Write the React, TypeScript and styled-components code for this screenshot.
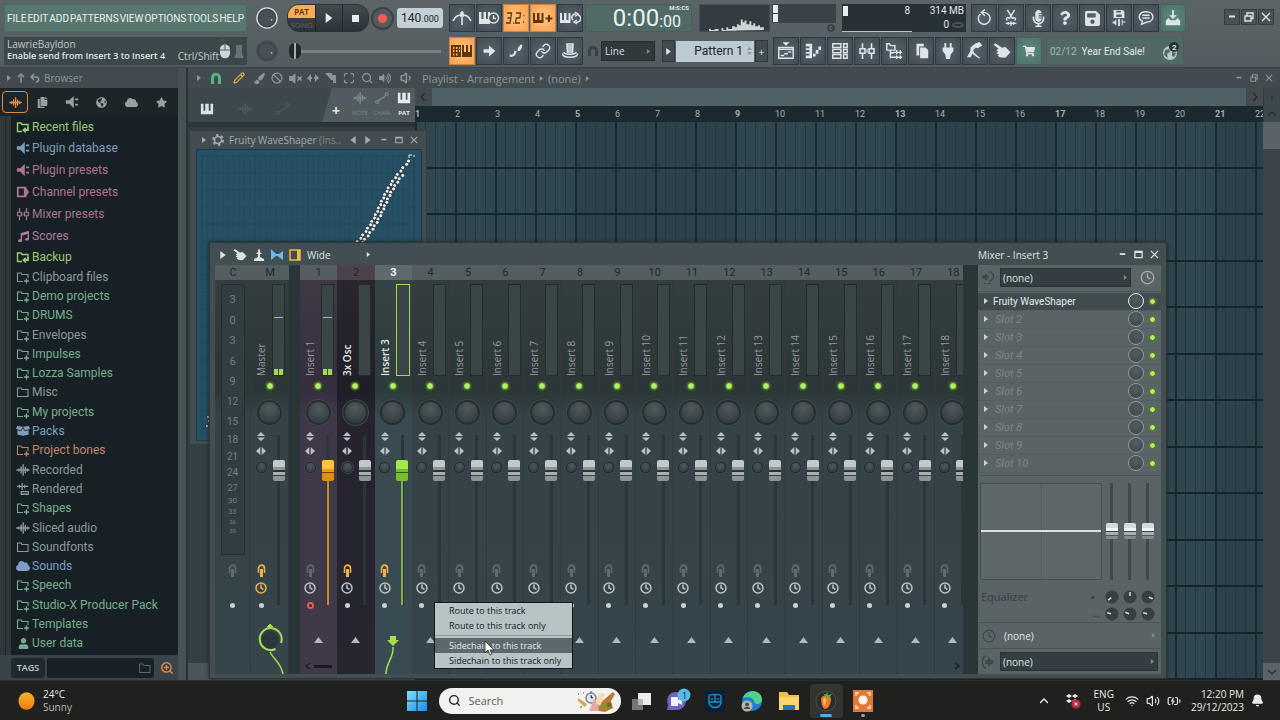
import React from 'react';
import styled, { createGlobalStyle, css } from 'styled-components';
import {
  FaStar, FaCloud, FaGlobeAmericas, FaSave, FaQuestion, FaShoppingCart,
  FaMicrophoneAlt, FaCopy, FaUser, FaMusic, FaVolumeMute, FaPaintBrush,
  FaBoxOpen, FaVolumeUp,
} from 'react-icons/fa';
import { Ban, Clock, Link, Maximize, Pencil, Search, Volume1, Volume2, Wifi, ZoomIn, BatteryCharging, Bell } from 'lucide-react';

const UI = '"Open Sans", "Noto Sans", sans-serif';
const NARROW = 'Roboto, "Open Sans", sans-serif';

const Global = createGlobalStyle`
  * { box-sizing: border-box; }
  html, body { margin: 0; background: #20211e; }
  body { font-family: ${UI}; font-size: 11px; color: #c3cbcd; }
  button, input, select { font: inherit; color: inherit; margin: 0; padding: 0; border: 0; background: none; }
  svg { display: block; flex: none; }
  ul { list-style: none; margin: 0; padding: 0; }
`;

/* ---------- shared shapes ---------- */

type IconProps = { size?: number };

const WaveIcon = ({ size = 14 }: IconProps) => (
  <svg width={size} height={size} viewBox="0 0 16 16" fill="none" stroke="currentColor" strokeWidth="1.6" strokeLinecap="round">
    <path d="M3.4 6.8v2.4M5.8 4.500v7M8.2 2v12M10.6 5v6M13 6.8v2.4M1 8h14" />
  </svg>
);
const PianoIcon = ({ size = 14 }: IconProps) => (
  <svg width={size} height={size} viewBox="0 0 16 16" fill="currentColor">
    <path d="M1 2h3v8h2V2h4v8h2V2h3v12H1z" />
  </svg>
);
const PathIcon = ({ size = 14 }: IconProps) => (
  <svg width={size} height={size} viewBox="0 0 16 16" fill="none" stroke="currentColor" strokeWidth="1.3">
    <circle cx="2.5" cy="12.5" r="1.7" /><circle cx="13.5" cy="3.5" r="1.7" />
    <path d="M4 11.5C6 7.500 9 10 12 5" />
  </svg>
);
const FolderIcon = ({ kind }: { kind: string }) => (
  <svg width="14" height="14" viewBox="0 0 14 14" fill="none" stroke="currentColor" strokeWidth="1.1">
    {kind === 'plain' && <path d="M1.500 3h3.500l1 1.500h6v7H1.500z" />}
    {kind === 'plus' && <><path d="M7 11.500H1.500V3H5l1 1.500h6v3.500" /><path d="M10.500 8.500v5M8 11h5" strokeWidth="1.4" /></>}
    {kind === 'link' && <><path d="M6 11.500H1.500V3H5l1 1.500h6v2" strokeWidth="1.4" /><path d="M12 6.500v3.500H8M9.800 7.800L7.500 10l2.300 2.300" strokeWidth="1.8" /></>}
  </svg>
);
const MixerIcon = ({ size = 14 }: IconProps) => (
  <svg width={size} height={size} viewBox="0 0 16 16" fill="none" stroke="currentColor" strokeWidth="1.4">
    <path d="M4 1v5M4 10v5M12 1v5M12 10v5M1.800 6h4.400v4H1.800zM9.800 6h4.400v4H9.800z" />
    <path d="M8 6.500v3" strokeWidth="1" />
  </svg>
);
const ChannelIcon = ({ size = 14 }: IconProps) => (
  <svg width={size} height={size} viewBox="0 0 16 16" fill="currentColor">
    <path d="M1 2h11v2l3 4-3 4v2H1zM3 4v8h6V4z" fillRule="evenodd" />
  </svg>
);
const RenderIcon = () => (
  <svg width="14" height="14" viewBox="0 0 16 16" fill="none" stroke="currentColor" strokeWidth="1.5">
    <path d="M1 5h13M4 3v4M7 1v8M10 3v4M6 11h8v3H6z" />
  </svg>
);
const SpeakerPlug = () => (
  <svg width="14" height="14" viewBox="0 0 16 16" fill="currentColor">
    <path d="M1 6h4l5-5v14l-5-5H1zM11.500 4H15v2h-3.500zM11.500 10H15v2h-3.500z" />
  </svg>
);
const MagnetIcon = () => (
  <svg width="12" height="12" viewBox="0 0 12 12" fill="none" stroke="currentColor" strokeWidth="3"><path d="M2.500 12V6c0-5 7-5 7 0v6" /></svg>
);
const Tri = ({ dir = 'right', size = 6 }: { dir?: string; size?: number }) => (
  <svg width={size} height={size} viewBox="0 0 6 6" fill="currentColor">
    <path d={dir === 'right' ? 'M1 0l4 3-4 3z' : 'M5 0L1 3l4 3z'} />
  </svg>
);
const WinIcon = ({ kind, size = 10 }: { kind: string; size?: number }) => (
  <svg width={size} height={size} viewBox="0 0 10 10" fill="none" stroke="currentColor" strokeWidth="1.400">
    {kind === 'min' && <path d="M2 4.500h6" strokeWidth="2" />}
    {kind === 'max' && <path d="M1 2.500h8M1 1.500h8v7H1z" />}
    {kind === 'restore' && <path d="M1 4h6v5H1zM3 3.500V1h6v5.500H7.500" />}
    {kind === 'close' && <path d="M1 1l8 8M9 1L1 9" />}
  </svg>
);
const HandIcon = ({ size = 16 }: IconProps) => (
  <svg width={size} height={size} viewBox="0 0 16 16" fill="currentColor">
    <path d="M0.500 2.500L2 1l6 4 3-.5 4.500 4.500-4.500 5-5-.5L4 12l1.500-1L3 10l1.500-1.500L3 7l2-1z" />
  </svg>
);

/* ---------- main toolbar ---------- */

const Shell = styled.div`
  display: flex;
  flex-direction: column;
  min-height: 100vh;
`;
const Toolbar = styled.header`
  display: flex;
  padding: 4px 6px 2px 4px;
  background: linear-gradient(#5b6467, #535c60);
  border-bottom: 1px solid #3b4448;
`;
const ToolCol = styled.div<{ $w?: number }>`
  display: flex;
  flex-direction: column;
  gap: 5px;
  min-width: 0;
  ${p => (p.$w ? css`flex: 0 0 ${p.$w}px;` : css`flex: 1;`)}
`;
const ToolRow = styled.div`
  display: flex;
  align-items: center;
  height: 28px;
`;
const Group = styled.div<{ $ml?: number }>`
  display: flex;
  align-items: center;
  gap: 1px;
  margin-left: ${p => p.$ml ?? 0}px;
`;
const Menu = styled.nav`
  display: flex;
  align-items: center;
  justify-content: space-between;
  height: 28px;
  padding: 0 2px;
  background: #58776e;
  border: 1px solid #496a62;
  font: 10px ${NARROW};
  color: #e9f2ef;
  button { cursor: pointer; }
`;
const Hint = styled.div`
  display: flex;
  height: 28px;
  padding: 0 3px;
  background: #3c474b;
  font-size: 10px;
  line-height: 12px;
  color: #c1cacc;
`;
const HintText = styled.div`
  flex: 1;
  white-space: nowrap;
  padding-top: 1px;
  p { margin: 0; display: flex; justify-content: space-between; }
  strong { font-weight: 600; font-size: 9px; color: #dfe6e8; }
`;
const KnobCell = styled.div`
  display: flex;
  align-items: center;
  justify-content: center;
  height: 28px;
`;
const ToolButton = styled.button<{ $tone?: 'on' | 'green' }>`
  display: flex;
  align-items: center;
  justify-content: center;
  width: 26px;
  height: 28px;
  border: 1px solid #2f383c;
  color: #dde5e8;
  background: radial-gradient(#56616a, #424c53);
  ${p => p.$tone === 'on' && css`background: radial-gradient(#ffc685, #f9a04e); border-color: #c98443; color: #5f3506;`}
  ${p => p.$tone === 'green' && css`background: radial-gradient(#5f8b82, #4d7169); border-color: #45645e;`}
`;
const Transport = styled.div`
  display: flex;
  width: 82px;
  height: 28px;
  border-radius: 12px;
  overflow: hidden;
  background: linear-gradient(#424b50, #2b3338);
  border: 1px solid #2a3236;
`;
const ModeSwitch = styled.div`
  display: flex;
  flex-direction: column;
  width: 27px;
  font-size: 8px;
  line-height: 12px;
  text-align: center;
  button:first-child { background: #f9ac55; color: #3b2a10; font-weight: 600; height: 13px; }
  button:last-child { color: #5d676c; height: 13px; }
`;
const TransportButton = styled.button`
  flex: 1;
  display: flex;
  align-items: center;
  justify-content: center;
  border-left: 1px solid #20282c;
  color: #e8eeee;
`;
const Record = styled.button`
  width: 23px;
  height: 23px;
  margin-left: 2px;
  border-radius: 50%;
  border: 2px solid #394347;
  background: radial-gradient(circle, #fb5a50 0 4px, #505a60 5px);
`;
const Tempo = styled.button`
  display: flex;
  align-items: baseline;
  justify-content: center;
  width: 46px;
  height: 20px;
  margin-left: 3px;
  border-radius: 3px;
  background: #c3d0d6;
  color: #1d262a;
  font: 12px/20px ${NARROW};
  small { font-size: 9px; }
`;
const TimeBox = styled.output`
  display: flex;
  justify-content: flex-end;
  align-items: flex-end;
  position: relative;
  width: 107px;
  height: 28px;
  padding-right: 10px;
  margin-left: 2px;
  background: #526a66;
  border: 1px solid #48605c;
  font: 24px/26px ${NARROW};
  color: #e9f3f1;
  small { font-size: 16px; line-height: 19px; }
  sup { position: absolute; right: 2px; top: 0; font: 600 6px/6px ${NARROW}; }
`;
const Scope = styled.div`
  display: flex;
  align-items: flex-end;
  width: 71px;
  height: 28px;
  margin-left: 7px;
  background: #333d41;
  border: 1px solid #454f53;
`;
const PeakPanel = styled.div`
  display: flex;
  flex-direction: column;
  align-items: flex-end;
  height: 28px;
  width: 64px;
  margin-left: 2px;
`;
const PeakBars = styled.div`
  align-self: stretch;
  height: 19px;
  padding: 1px;
  background: #3a4448;
  i { display: block; width: 5px; height: 8px; margin-bottom: 1px; background: #e8edee; }
`;
const Cpu = styled.div`
  display: grid;
  grid-template-columns: 70px 1fr;
  grid-auto-rows: 14px;
  width: 124px;
  height: 28px;
  margin-left: 6px;
  background: #283135;
  font: 10px/14px ${NARROW};
  color: #e1e7e8;
  text-align: right;
  span { padding-right: 2px; }
`;
const CpuBar = styled.span`
  display: flex;
  justify-content: space-between;
  align-items: center;
  i { width: 5px; height: 10px; background: #e8edee; margin-left: 1px; }
`;
const CpuLine = styled.span`
  border-bottom: 1px solid #b9c1c3;
`;
const CpuVoices = styled.span`
  display: flex;
  justify-content: flex-end;
  align-items: center;
  gap: 3px;
  i { width: 12px; height: 6px; border: 2px solid #4c565a; border-radius: 50%; }
`;
const WindowButtons = styled.div`
  display: flex;
  gap: 1px;
  margin: 0 0 3px auto;
  button {
    display: flex; align-items: center; justify-content: center;
    width: 16px; height: 16px; border: 1px solid #333c40; background: #485155; color: #dde4e6;
  }
`;
const Slider = styled.input`
  appearance: none;
  width: 152px;
  height: 16px;
  margin: 0 4px 0 2px;
  background: linear-gradient(#79837f, #79837f) center / 100% 3px no-repeat;
  &::-webkit-slider-thumb {
    appearance: none; width: 12px; height: 16px; border-radius: 6px;
    background: linear-gradient(90deg, #20282b 5px, #a4adae 5px 7px, #20282b 7px);
  }
`;
const SnapBox = styled.label`
  display: flex;
  align-items: center;
  width: 54px;
  height: 20px;
  margin-left: 2px;
  padding: 0 3px;
  border: 1px solid #262e31;
  background: #30393d;
  color: #7c878a;
  select { appearance: none; flex: 1; min-width: 0; font-size: 10px; color: #d5dcde; }
`;
const PatternButton = styled.button`
  display: flex;
  align-items: center;
  justify-content: flex-end;
  gap: 4px;
  width: 78px;
  height: 21px;
  padding-right: 2px;
  background: #bccad1;
  color: #1a2429;
  font: 12px/20px ${NARROW};
  svg { color: #8a979c; }
`;
const PatternSide = styled.button`
  display: flex; align-items: center; justify-content: center;
  width: 13px;
  height: 22px;
  border: 1px solid #2e373b;
  background: #414b50;
  color: #dfe6e8;
`;
const News = styled.a`
  display: flex;
  align-items: center;
  gap: 5px;
  width: 138px;
  height: 28px;
  margin-left: 4px;
  padding: 0 3px;
  background: #516964;
  border: 1px solid #48605c;
  font: 10px ${NARROW};
  color: #e0e9e7;
  text-decoration: none;
  white-space: nowrap;
  time { color: #a6b5b2; }
  svg { margin-left: auto; }
`;

const KnobSvg = ({ size, ring }: { size: number; ring: string }) => (
  <svg width={size} height={size} viewBox="0 0 24 24">
    <circle cx="12" cy="12" r="11" fill="#3d474c" stroke={ring} strokeWidth="1.500" />
    <circle cx="12" cy="12" r="8.500" fill="#475157" />
    <circle cx="17" cy="14" r="1" fill="#b9c2c4" />
  </svg>
);

const Icon = ({ d, size = 18, fill = false }: { d: string; size?: number; fill?: boolean }) => (
  <svg width={size} height={size} viewBox="0 0 20 20" fill={fill ? 'currentColor' : 'none'} stroke={fill ? 'none' : 'currentColor'} strokeWidth="1.600" fillRule="evenodd"><path d={d} /></svg>
);

const PianoClock = () => (
  <svg width="22" height="16" viewBox="0 0 22 16" fill="none" stroke="currentColor" strokeWidth="1.400">
    <path d="M1 2h2.500v7h2V2H8v7h2V2h2v12H1z" fill="currentColor" stroke="none" />
    <circle cx="15.500" cy="8" r="5" fill="#4b555c" /><path d="M15.500 5v3.500H18" />
  </svg>
);
const PianoPlus = ({ loop }: { loop?: boolean }) => (
  <svg width="22" height="16" viewBox="0 0 22 16" fill="currentColor">
    <path d="M1 3h2v7h2V3h2.500v7h2V3h2v10H1z" />
    {loop
      ? <path d="M14 10a3.500 3.500 0 0 1 3-6M19 5a3.500 3.500 0 0 1-2 7M16 2l3 2-3 2.500M18 14l-3-2 3-2" fill="none" stroke="currentColor" strokeWidth="1.500" />
      : <path d="M16 5h2v2.500h2.500v2H18V12h-2V9.500h-2.500v-2H16z" />}
  </svg>
);

const patternTools: { name: string; on?: boolean; icon: React.ReactNode }[] = [
  { name: 'Typing keyboard', on: true, icon: <svg width="22" height="14" viewBox="0 0 22 14" fill="currentColor"><path d="M0 1h10v12H0zM2 3v2h1.500V3zM5 3v2h1.500V3zM8 3v2h1V3zM2 6v2h1.500V6zM5 6v2h1.500V6zM8 6v2h1V6zM2 9.500v2h1.500v-2zM5 9.500v2h1.500v-2z" fillRule="evenodd" /><path d="M11 1h2v7h2V1h2v7h2V1h2v12H11z" /></svg> },
  { name: 'Step edit', icon: <Icon fill d="M4 8h6V4l7 6-7 6v-4H4z" /> },
  { name: 'Slide notes', icon: <Icon fill d="M3 14c4 1 5-1 5-4h2.500c0 4-3 7-7.500 6.500zM12 8c0-3 2-2 2.500-5H17c0 4-2 5-2.500 7H12z" /> },
  { name: 'Multilink controllers', icon: <Link size={16} /> },
  { name: 'Auto stamp', icon: <Icon size={20} d="M7 3h6l-.5 8h-5zM4 11c0 3 12 3 12 0M2.500 12.500c0 5 15 5 15 0M7 5h6M7 7h6M7.300 9h5.400" /> },
];
const fileTools: { name: string; green?: boolean; icon: React.ReactNode }[] = [
  { name: 'Undo', icon: <Icon d="M6 5.500A6.500 6.500 0 1 0 11 4H7M11 0.500L7 4 11 7.500" /> },
  { name: 'Cut sample', icon: <Icon d="M6 1l6 10M14 1L8 11M6 12.500a1.500 1.500 0 1 1 2-1.500M14 12.500a1.500 1.500 0 1 0-2-1.500M4 16h12M7 14.500v3M10 13.500v5M13 14.500v3" /> },
  { name: 'Record audio', icon: <FaMicrophoneAlt size={17} /> },
  { name: 'Help', icon: <FaQuestion size={14} /> },
  { name: 'Save', icon: <FaSave size={17} /> },
  { name: 'Save as audio', icon: <Icon fill d="M4 1h10l2 2v7H4zM7 2v2h5V2zM7 6v3h6V6zM3 14h2v-1h1v-1h1v6H6v-1H5v-1H3zM9 11h2v8H9zM13 12h1v2h3v1h-3v3h-1z" /> },
  { name: 'Chat', icon: <Icon d="M10 3c10 0 10 11 1 11.500L5 17l1-3.500C0 11 2 3 10 3zM6 7h8M6 10h8" /> },
  { name: 'Download', green: true, icon: <Icon fill d="M9 1h2v6h3l-4 4-4-4h3zM2 13l3-3 2 2.500h6L15 10l3 3v5H2z" /> },
];
const viewTools: { name: string; green?: boolean; icon: React.ReactNode }[] = [
  { name: 'Playlist', icon: <Icon d="M2 6h16v12H2zM2 8h16M4 15h4M8 13h4M12 11h4M8 1h4l-2 2z" /> },
  { name: 'Piano roll', icon: <Icon fill d="M2 2h7v16H2v-3h4v-2H2v-2h4V9H2V7h4V5H2zM10 13h3v3h-3zM13 9h3v4h-3zM16 5h3v4h-3z" /> },
  { name: 'Channel rack', icon: <Icon d="M2 2h9v4H2zM2 8h9v4H2zM2 14h9v4H2zM14 2h4v4h-4zM14 8h4v4h-4zM14 14h4v4h-4z" /> },
  { name: 'Mixer', icon: <MixerIcon size={18} /> },
  { name: 'Browser', icon: <Icon d="M2 2h3l1 2h5v5H2zM6 9v9M6 12h4M6 17h4M13 9v5M17 9v5M10 11.500h9M13 15v4M17 15v4M10 17h9" /> },
  { name: 'Project picker', icon: <Icon fill d="M5 2h8v3H8v10H5zM9 6h6l3 3v9H9z" /> },
  { name: 'Plugin picker', icon: <Icon fill d="M6 1h2v5h4V1h2v5h2v4l-3 4-1 5H8l-1-5-3-4V6h2z" /> },
  { name: 'Tempo tapper', icon: <Icon fill d="M10 2l5-2 3 4-5 3-2-1-3 3 1 3 7 6h-2l-7-5-2 4H1l4-7v-4z" /> },
  { name: 'Touch controllers', icon: <HandIcon size={18} /> },
  { name: 'Shop', green: true, icon: <FaShoppingCart size={12} /> },
];

const spectrum = 'M8 27v-2h2v1h4v-1h4v2h3v-3h2v2h3v-3h2v2h4v-3h3v1h2v-3h2v1h2v-6h2v3h2v-2h2v4h3v-3h2v4h2v-2h2v3h3v-1h2v2h4v3z';

const TopBar = () => (
  <Toolbar>
    <ToolCol $w={243}>
      <Menu>{['FILE', 'EDIT', 'ADD', 'PATTERNS', 'VIEW', 'OPTIONS', 'TOOLS', 'HELP'].map(m => <button key={m}>{m}</button>)}</Menu>
      <Hint>
        <HintText>
          <p>LawrieBayldon</p>
          <p><strong>Enable send from Insert 3 to Insert 4</strong><span>Ctrl/Shift</span></p>
        </HintText>
        <svg width="25" height="24" viewBox="0 0 25 24">
          <path d="M1 12c0-6 10-6 10 0v4c0 7-10 7-10 0z" fill="#cdd4d5" /><path d="M6 8v5M1 13h10M6 8c0-4-3-3-2-6" stroke="#566064" fill="none" />
          <path d="M17 8h6v9l2 4H15l2-4z" fill="#687276" />
        </svg>
      </Hint>
    </ToolCol>
    <ToolCol $w={40}>
      <KnobCell><KnobSvg size={22} ring="#d5dddf" /></KnobCell>
      <KnobCell><KnobSvg size={22} ring="#454f54" /></KnobCell>
    </ToolCol>
    <ToolCol>
      <ToolRow>
        <Transport>
          <ModeSwitch><button>PAT</button><button>SONG</button></ModeSwitch>
          <TransportButton aria-label="Play"><Tri size={10} /></TransportButton>
          <TransportButton aria-label="Stop"><svg width="7" height="7"><rect width="7" height="7" fill="currentColor" /></svg></TransportButton>
        </Transport>
        <Record aria-label="Record" />
        <Tempo>140<small>.000</small></Tempo>
        <Group $ml={6}>
          <ToolButton aria-label="Metronome"><Icon size={20} d="M10 3v14M1 13c3-6 6-6 9-6s6 0 9 6M9 5h2v3H9z" /></ToolButton>
          <ToolButton aria-label="Wait for input"><PianoClock /></ToolButton>
          <ToolButton $tone="on" aria-label="Countdown"><svg width="20" height="14" viewBox="0 0 20 14" fill="none" stroke="currentColor" strokeWidth="1.300"><path d="M1 2h4.500L4 12H0M1.500 7h3M7 12h1M10 2h4.500l-.7 5h-3.500L9.500 12H14M17.500 4.500h1M17 11h1" /></svg></ToolButton>
          <ToolButton $tone="on" aria-label="Blend notes"><PianoPlus /></ToolButton>
          <ToolButton aria-label="Loop recording"><PianoPlus loop /></ToolButton>
        </Group>
        <TimeBox><sup>M:S:CS</sup>0:00<small>:00</small></TimeBox>
        <Scope><svg width="69" height="26" viewBox="0 0 69 27"><path d={spectrum} fill="#cbd4d6" /></svg></Scope>
        <PeakPanel>
          <PeakBars><i /><i /></PeakBars>
          <svg width="10" height="9" viewBox="0 0 10 9" fill="none" stroke="#333c40" strokeWidth="1.500"><circle cx="5" cy="5" r="3" /><path d="M5 5h3" /></svg>
        </PeakPanel>
        <Cpu>
          <CpuBar><i />8</CpuBar><span>314 MB</span>
          <CpuLine /><CpuVoices>0<i /></CpuVoices>
        </Cpu>
        <Group $ml={5}>{fileTools.map(t => <ToolButton key={t.name} aria-label={t.name} $tone={t.green ? 'green' : undefined}>{t.icon}</ToolButton>)}</Group>
        <WindowButtons>{['min', 'restore', 'close'].map(k => <button key={k} aria-label={k}><WinIcon kind={k} /></button>)}</WindowButtons>
      </ToolRow>
      <ToolRow>
        <Slider type="range" defaultValue={0} aria-label="Song position" />
        <Group $ml={4}>{patternTools.map(t => <ToolButton key={t.name} aria-label={t.name} $tone={t.on ? 'on' : undefined}>{t.icon}</ToolButton>)}</Group>
        <Group $ml={4}><svg width="12" height="12" viewBox="0 0 12 12" fill="none" stroke="#394347" strokeWidth="3"><path d="M2.500 11V6c0-5 7-5 7 0v5" /></svg></Group>
        <SnapBox><select aria-label="Snap" defaultValue="Line"><option>Line</option></select><Tri size={5} /></SnapBox>
        <Group $ml={7}>
          <PatternSide aria-label="Pattern menu"><Tri size={7} /></PatternSide>
          <PatternButton>Pattern 1<svg width="5" height="10" viewBox="0 0 5 10" fill="currentColor"><path d="M0 4l2.500-3L5 4zM0 6l2.500 3L5 6z" /></svg></PatternButton>
          <PatternSide aria-label="Add pattern">+</PatternSide>
        </Group>
        <Group $ml={5}>{viewTools.map(t => <ToolButton key={t.name} aria-label={t.name} $tone={t.green ? 'green' : undefined}>{t.icon}</ToolButton>)}</Group>
        <News href="#news"><time>02/12</time>Year End Sale!<svg width="18" height="22" viewBox="0 0 18 22"><circle cx="8" cy="13" r="7" fill="#bccbc8" /><path d="M3 10l4-1 1 3-3 2 1 4-4-3zM10 12l4 1-2 4-2-1z" fill="#526a66" /><circle cx="12" cy="7" r="5" fill="#29332f" /><text x="10" y="10" fontSize="8" fontWeight="700" fill="#dfe8e5">2</text></svg></News>
      </ToolRow>
    </ToolCol>
  </Toolbar>
);

/* ---------- browser ---------- */

const Main = styled.div`
  flex: 1;
  display: flex;
  min-height: 612px;
`;
const Browser = styled.aside`
  flex: 0 0 178px;
  display: flex;
  flex-direction: column;
  background: #2f393d;
`;
const BrowserTitle = styled.div`
  display: flex;
  align-items: center;
  gap: 4px;
  height: 20px;
  padding-left: 6px;
  background: #414b4f;
  color: #8c9699;
  font-size: 10px;
`;
const BrowserTabs = styled.div`
  display: flex;
  align-items: center;
  height: 28px;
  background: #1d2529;
  padding: 0 2px;
  button { flex: 1; height: 22px; display: flex; align-items: center; justify-content: center; color: #98a1a4; }
  button:first-child { flex: 0 0 26px; border: 1px solid #d98a48; border-radius: 4px; color: #e78c42; }
`;
const BrowserBody = styled.div`
  flex: 1;
  display: flex;
  flex-direction: column;
  margin-left: 11px;
  background: #172125;
  box-shadow: -5px 0 0 #2f393d, -6px 0 0 #1c2528;
`;
const Places = styled.ul`
  padding-top: 1px;
`;
const Folders = styled.ul`
  flex: 1;
  display: grid;
  grid-auto-rows: 1fr;
  padding-bottom: 2px;
`;
const PlaceRow = styled.li<{ $color: string; $h?: number }>`
  display: flex;
  align-items: center;
  gap: 2px;
  height: ${p => (p.$h ? `${p.$h}px` : 'auto')};
  padding-left: 5px;
  color: ${p => p.$color};
  font: 12px/18px ${NARROW};
`;
const TagBar = styled.div`
  display: flex;
  align-items: center;
  gap: 2px;
  height: 25px;
  padding: 0 4px 0 11px;
  background: #39444a;
  color: #c0c8cb;
  button:first-child { width: 34px; height: 20px; background: #20292e; border-radius: 4px; font-weight: 600; font-size: 9px; }
`;
const TagField = styled.label`
  flex: 1;
  display: flex;
  align-items: center;
  height: 20px;
  padding-right: 2px;
  background: #172024;
  border-radius: 3px;
  color: #5b6569;
  input { flex: 1; min-width: 0; width: 20px; }
`;
const FindButton = styled.button`
  color: #e08b3e;
  padding-left: 4px;
`;

const G = '#77ad8e';
const N = '#8b999c';
const places: [string, string, number, React.ReactNode][] = [
  ['Recent files', '#9cc873', 20, <FolderIcon kind="link" />],
  ['Plugin database', '#7f9dba', 22, <SpeakerPlug />],
  ['Plugin presets', '#b37291', 22, <SpeakerPlug />],
  ['Channel presets', '#b37291', 22, <ChannelIcon />],
  ['Mixer presets', '#a87393', 22, <MixerIcon />],
  ['Scores', '#b5789f', 22, <FaMusic size={11} />],
  ['Backup', '#9cc873', 20, <FolderIcon kind="link" />],
];
const plus = <FolderIcon kind="plus" />;
const folders: [string, string, React.ReactNode][] = [
  ['Clipboard files', N, plus], ['Demo projects', G, plus], ['DRUMS', G, plus], ['Envelopes', N, plus],
  ['Impulses', G, plus], ['Lozza Samples', G, plus], ['Misc', N, <FolderIcon kind="plain" />], ['My projects', G, plus],
  ['Packs', '#7f9dba', <FaBoxOpen size={14} />], ['Project bones', '#c0866c', plus], ['Recorded', N, <WaveIcon />],
  ['Rendered', N, <RenderIcon />], ['Shapes', G, plus], ['Sliced audio', N, <WaveIcon />],
  ['Soundfonts', N, <FolderIcon kind="plain" />], ['Sounds', '#7d9cc8', <FaCloud size={14} />], ['Speech', G, plus],
  ['Studio-X Producer Pack', G, plus], ['Templates', G, plus], ['User data', G, <FaUser size={11} />],
];
const IconSlot = styled.span`
  display: flex;
  justify-content: center;
  width: 14px;
`;

const BrowserPanel = () => (
  <Browser>
    <BrowserTitle>
      <Tri />
      <svg width="10" height="10" viewBox="0 0 10 10" fill="none" stroke="currentColor" strokeWidth="1.500"><path d="M5 10V1M2 4l3-3 3 3" /></svg>
      <svg width="10" height="10" viewBox="0 0 10 10" fill="none" stroke="currentColor" strokeWidth="1.500"><path d="M4 1L1 4l3 3M1 4h5c4 0 3 5 0 5" /></svg>
      Browser
    </BrowserTitle>
    <BrowserTabs>
      <button aria-label="All"><WaveIcon size={13} /></button>
      <button aria-label="Project"><FaCopy size={11} /></button>
      <button aria-label="Plugins"><SpeakerPlug /></button>
      <button aria-label="Web"><FaGlobeAmericas size={11} /></button>
      <button aria-label="Cloud"><FaCloud size={13} /></button>
      <button aria-label="Favourites"><FaStar size={11} /></button>
    </BrowserTabs>
    <BrowserBody>
      <Places>{places.map(([n, c, h, i]) => <PlaceRow key={n} $color={c} $h={h}><IconSlot>{i}</IconSlot>{n}</PlaceRow>)}</Places>
      <Folders>{folders.map(([n, c, i]) => <PlaceRow key={n} $color={c}><IconSlot>{i}</IconSlot>{n}</PlaceRow>)}</Folders>
    </BrowserBody>
    <TagBar>
      <button>TAGS</button>
      <TagField><input aria-label="Search browser" /><FolderIcon kind="plain" /></TagField>
      <FindButton aria-label="Find"><ZoomIn size={14} strokeWidth={2.5} /></FindButton>
    </TagBar>
  </Browser>
);

/* ---------- playlist ---------- */

const Splitter = styled.div`
  flex: 0 0 10px;
  background: linear-gradient(90deg, #475155 0 8px, #2a3337 8px);
`;
const Workspace = styled.main`
  position: relative;
  flex: 1;
  min-width: 0;
  display: flex;
  flex-direction: column;
  overflow: hidden;
  background: #3d484c;
`;
const TitleRow = styled.div`
  display: flex;
  align-items: center;
  gap: 4px;
  height: 20px;
  padding: 0 7px 0 8px;
  background: #424c50;
  color: #8c9699;
  white-space: nowrap;
`;
const ToolSlot = styled.button<{ $color?: string; $w?: number }>`
  display: flex;
  justify-content: center;
  width: ${p => p.$w ?? 14}px;
  color: ${p => p.$color ?? '#8c9699'};
`;
const Push = styled.div`
  display: flex;
  gap: 7px;
  margin-left: auto;
`;
const HeadRow = styled.div`
  display: flex;
  height: 34px;
`;
const Modes = styled.div`
  display: flex;
  align-items: center;
  gap: 24px;
  width: 134px;
  padding: 8px 0 0 12px;
  color: #4d5960;
  svg:first-child { color: #dbe2e4; }
`;
const PickTab = styled.div`
  display: flex;
  align-items: center;
  width: 93px;
  padding: 0 2px 0 8px;
  gap: 8px;
  background: #525c60;
  clip-path: polygon(10px 0, 100% 0, 100% 100%, 0 100%);
  color: #e4eaec;
  b { padding: 12px 3px 0 0; width: 15px; text-align: center; font-size: 14px; line-height: 14px; }
`;
const PickItem = styled.button<{ $on?: boolean }>`
  display: flex;
  flex-direction: column;
  align-items: center;
  gap: 4px;
  width: 14px;
  padding-bottom: 3px;
  font-size: 6px;
  line-height: 8px;
  font-weight: ${p => (p.$on ? 700 : 400)};
  color: ${p => (p.$on ? '#e4eaec' : '#7d878a')};
`;
const TimeHead = styled.div`
  flex: 1;
  min-width: 0;
`;
const ScrollStrip = styled.div`
  display: flex;
  align-items: center;
  justify-content: space-between;
  height: 18px;
  padding: 0 4px;
  background: linear-gradient(90deg, #424c50 17px, #4d6166 17px calc(100% - 17px), #424c50 0);
  color: #222b2e;
`;
const Ruler = styled.div`
  display: flex;
  height: 16px;
  overflow: hidden;
  background: #1c2a2f;
`;
const Bar = styled.span<{ $strong: boolean }>`
  flex: 0 0 40px;
  min-width: 0;
  font: ${p => (p.$strong ? 700 : 400)} 9px/16px ${NARROW};
  color: #a4b0b3;
  &:last-child { flex-shrink: 1; }
`;
const HeadSide = styled.div`
  width: 17px;
  display: flex;
  flex-direction: column;
  border-left: 1px solid #30393d;
  button { flex: 1; display: flex; align-items: center; justify-content: center; color: #262e31; }
`;
const PlaylistBody = styled.div`
  flex: 1;
  display: flex;
`;
const TrackHeads = styled.div`
  width: 227px;
  background: linear-gradient(#2b3539 0 5px, #333f45 5px calc(100% - 17px), #4b565a 0);
`;
const TrackGrid = styled.div`
  flex: 1;
  display: grid;
  grid-auto-rows: 1fr;
  background:
    repeating-linear-gradient(90deg, #182a31 0 2px, transparent 2px 40px),
    repeating-linear-gradient(90deg, #23383f 0 1px, transparent 1px 10px),
    repeating-linear-gradient(90deg, #31474f 0 160px, #2c414a 160px 320px);
  div { border-bottom: 2px solid #14242a; }
`;
const VScroll = styled.div`
  width: 17px;
  display: flex;
  flex-direction: column;
  justify-content: space-between;
  background: #3b4448;
  i { height: 27px; background: #5a6468; }
  button { height: 17px; display: flex; align-items: center; justify-content: center; background: #5a6468; color: #262e31; }
`;
const Chevron = ({ d }: { d: string }) => <svg width="8" height="8" viewBox="0 0 8 8" fill="none" stroke="currentColor" strokeWidth="1.400"><path d={d} /></svg>;

const Playlist = () => (
  <>
    <TitleRow>
      <ToolSlot $w={6} aria-label="Menu"><Tri /></ToolSlot>
      <ToolSlot $color="#56b37f" $w={20} aria-label="Snap"><MagnetIcon /></ToolSlot>
      <ToolSlot $color="#d8ad4e" $w={18} aria-label="Draw"><Pencil size={12} strokeWidth={2.500} /></ToolSlot>
      <ToolSlot aria-label="Paint"><FaPaintBrush size={11} /></ToolSlot>
      <ToolSlot aria-label="Delete"><Ban size={12} strokeWidth={2.500} /></ToolSlot>
      <ToolSlot aria-label="Mute"><FaVolumeMute size={13} /></ToolSlot>
      <ToolSlot aria-label="Slip"><svg width="12" height="8" viewBox="0 0 12 8" fill="currentColor"><path d="M0 4l4-4v3h1v2H4v3zM12 4L8 0v3H7v2h1v3z" /></svg></ToolSlot>
      <ToolSlot aria-label="Slice"><svg width="12" height="12" viewBox="0 0 12 12" fill="currentColor"><path d="M0 1h7v2l4 0v8H8V8H6z" /></svg></ToolSlot>
      <ToolSlot aria-label="Select"><Maximize size={12} strokeWidth={2.500} /></ToolSlot>
      <ToolSlot aria-label="Zoom"><Search size={12} strokeWidth={2.500} /></ToolSlot>
      <ToolSlot aria-label="Playback"><FaVolumeUp size={12} /></ToolSlot>
      <ToolSlot $w={22} aria-label="Arrangement"><Volume1 size={14} strokeWidth={2.500} /></ToolSlot>
      <span>Playlist - Arrangement</span><Tri size={5} /><span>(none)</span><Tri size={5} />
      <Push>{['min', 'restore', 'close'].map(k => <button key={k} aria-label={k}><WinIcon kind={k} size={8} /></button>)}</Push>
    </TitleRow>
    <HeadRow>
      <Modes><PianoIcon /><WaveIcon /><PathIcon /></Modes>
      <PickTab>
        <b>+</b>
        <PickItem><WaveIcon />NOTE</PickItem>
        <PickItem><PathIcon />CHAN</PickItem>
        <PickItem $on><PianoIcon />PAT</PickItem>
      </PickTab>
      <TimeHead>
        <ScrollStrip><Chevron d="M6 0L2 4l4 4" /><Chevron d="M2 0l4 4-4 4" /></ScrollStrip>
        <Ruler>{Array.from({ length: 22 }, (_, i) => <Bar key={i} $strong={i % 4 === 0}>{i + 1}</Bar>)}</Ruler>
      </TimeHead>
      <HeadSide><button aria-label="Detach">ı</button><button aria-label="Scroll up"><Chevron d="M0 6l4-4 4 4" /></button></HeadSide>
    </HeadRow>
    <PlaylistBody>
      <TrackHeads />
      <TrackGrid>{Array.from({ length: 12 }, (_, i) => <div key={i} />)}</TrackGrid>
      <VScroll><i /><button aria-label="Scroll down"><Chevron d="M0 2l4 4 4-4" /></button></VScroll>
    </PlaylistBody>
  </>
);

/* ---------- floating windows ---------- */

const ShaperWindow = styled.section`
  position: absolute;
  left: 1px;
  top: 62px;
  width: 238px;
  height: 315px;
  display: flex;
  flex-direction: column;
  padding: 0 5px 3px 6px;
  background: #434d50;
  border: 1px solid #343d41;
`;
const ShaperTitle = styled.div`
  display: flex;
  align-items: center;
  gap: 5px;
  height: 19px;
  padding: 0 3px 0 5px;
  white-space: nowrap;
  font-size: 10px;
  color: #a2abad;
  em { font-style: normal; color: #7f898c; }
`;
const Pale = styled.div`
  display: flex;
  align-items: center;
  gap: 7px;
  margin-left: auto;
`;

const curve: [number, number][] = [];
for (let i = 0; i < 26; i += 1) {
  const t = i / 25;
  const x = 215 - 55 * t - 3 * Math.sin(t * 6);
  const y = 12 + 84 * t;
  curve.push([x - 2.500 + (i % 2), y]);
  if (i > 3) curve.push([x + 3 - (i % 2), y + 1]);
}

const Shaper = () => (
  <ShaperWindow>
    <ShaperTitle>
      <Tri />
      <svg width="12" height="12" viewBox="0 0 12 12" fill="none" stroke="currentColor"><circle cx="6" cy="6" r="3.500" strokeWidth="1.600" /><circle cx="6" cy="6" r="5" strokeWidth="2" strokeDasharray="2.500 2.740" /></svg>
      <span>Fruity WaveShaper <em>(Ins..</em></span>
      <Pale><Tri dir="left" size={8} /><Tri size={8} /></Pale>
      <Pale>{['min', 'max', 'close'].map(k => <button key={k} aria-label={k}><WinIcon kind={k} size={8} /></button>)}</Pale>
    </ShaperTitle>
    <svg width="226" height="292" viewBox="0 0 226 292">
      <rect width="226" height="292" fill="#265064" stroke="#1a3a4a" strokeWidth="2" />
      {Array.from({ length: 40 }, (_, i) => <path key={i} d={`M${6 + i * 5.300} 7v278`} stroke="#214859" strokeWidth={i % 10 === 0 ? 1.200 : 0.500} />)}
      {Array.from({ length: 17 }, (_, i) => <path key={i} d={`M6 ${7 + i * 17}h212`} stroke="#214859" strokeWidth={i % 4 === 0 ? 1.200 : 0.600} />)}
      <path d="M218 7v280" stroke="#1c3f50" />
      {curve.map(([x, y], i) => <circle key={i} cx={x} cy={y} r="2" fill="#eef2f3" stroke="#1d2c33" strokeWidth="0.800" />)}
      <path d="M213 9v-3h3M217 7h2" stroke="#e6f1f5" fill="none" />
      {[[14, 264], [12, 268], [13, 272], [11, 277], [14, 275]].map(([x, y]) => <circle key={y} cx={x} cy={y} r="1.500" fill="#eef2f3" stroke="#1d2c33" />)}
    </svg>
  </ShaperWindow>
);

const MixerWindow = styled.section`
  position: absolute;
  left: 21px;
  top: 174px;
  bottom: 1px;
  width: 958px;
  display: flex;
  flex-direction: column;
  padding: 0 5px 4px;
  background: #434e52;
  border: 1px solid #2d3639;
  box-shadow: 0 0 4px #1c2528;
`;
const MixerTitle = styled.div`
  display: flex;
  align-items: center;
  gap: 6px;
  height: 22px;
  padding: 1px 2px 0 4px;
  font-size: 10px;
  color: #dce3e5;
`;
const WideLabel = styled.button`
  display: flex;
  align-items: center;
  justify-content: space-between;
  width: 64px;
`;
const MixerCaption = styled.div`
  display: flex;
  align-items: center;
  justify-content: space-between;
  width: 181px;
  margin-left: auto;
`;
const MixerBody = styled.div`
  flex: 1;
  display: flex;
  min-height: 0;
`;
const Gap = styled.div<{ $w: number }>`
  flex: 0 0 ${p => p.$w}px;
  background: #2a3538;
`;
const StripsClip = styled.div`
  flex: 1;
  display: flex;
  overflow: hidden;
`;
const Strips = styled.div`
  flex: 0 0 672px;
  display: grid;
  grid-template-columns: repeat(18, 1fr);
`;

type Tone = 'normal' | 'purple' | 'dark' | 'selected';
const bodyFill = {
  normal: 'linear-gradient(#363f40, #2d3637 125px, #354247 150px, #36454b)',
  purple: 'linear-gradient(#443a47, #352e3d 125px, #403848 150px, #3f3948)',
  dark: 'linear-gradient(#2b2730, #1f1e27 125px, #26232e 150px, #262530)',
  selected: 'linear-gradient(#384548, #2c3a3c 125px, #394a50 150px, #394b52)',
};
const headFill = { normal: '#545e61', purple: '#565d61', dark: '#4c424d', selected: '#5f6a6c' };

const Strip = styled.div<{ $tone: Tone; $w?: number }>`
  display: flex;
  flex-direction: column;
  align-items: center;
  min-width: 0;
  ${p => p.$w && css`flex: 0 0 ${p.$w}px;`}
  background: ${p => bodyFill[p.$tone]};
  border-right: 1px solid ${p => (p.$tone === 'normal' ? '#303b3f' : 'transparent')};
`;
const StripHead = styled.div<{ $tone: Tone }>`
  align-self: stretch;
  height: 15px;
  margin-right: -1px;
  background: ${p => headFill[p.$tone]};
  color: ${p => (p.$tone === 'selected' ? '#f2f6f6' : '#20292c')};
  font: ${p => (p.$tone === 'selected' ? 700 : 400)} 11px/16px ${NARROW};
  text-align: center;
`;
const MeterRow = styled.div`
  display: flex;
  align-self: stretch;
  height: 98px;
  padding: 4px 2px 2px 1px;
`;
const StripName = styled.span<{ $bright?: boolean }>`
  width: 20px;
  writing-mode: vertical-rl;
  transform: rotate(180deg);
  font: ${p => (p.$bright ? 600 : 400)} 10px/18px ${UI};
  color: ${p => (p.$bright ? '#e3e9ea' : '#909a9d')};
  white-space: nowrap;
`;
const Meter = styled.div<{ $kind: string }>`
  width: 13px;
  height: 92px;
  padding: 0 1px;
  border: 1px solid #222b2d;
  background: #3a4547;
  display: flex;
  flex-direction: column;
  justify-content: space-between;
  ${p => p.$kind === 'selected' && css`border: 1px solid #a5d84b; margin-right: -1px; width: 14px;`}
  i { height: 1px; margin-top: 32px; background: #a2c944; }
  b { display: flex; gap: 1px; height: 6px; }
  b::before, b::after { content: ''; flex: 1; background: #a5d84b; }
`;
const LedBox = styled.input`
  appearance: none;
  width: 8px;
  height: 8px;
  border-radius: 50%;
  background: #b2ee66;
  border: 1px solid #3a6120;
  box-shadow: 0 0 2px #5d9431;
`;
const LedRow = styled.div`
  display: flex;
  align-items: center;
  height: 16px;
`;
const PanRow = styled.div`
  display: flex;
  align-items: center;
  height: 36px;
`;
const Pan = styled.button<{ $d: number }>`
  width: ${p => p.$d}px;
  height: ${p => p.$d}px;
  border-radius: 50%;
  background: radial-gradient(circle at 50% 30%, #505a5e, #353e43 75%);
  box-shadow: 0 0 0 2px #252e31, 0 0 0 3px #3d474a;
`;
const SmallPan = styled(Pan)`
  box-shadow: 0 0 0 1px #20292c, 0 0 0 2px #3d474a;
`;
const Lower = styled.div`
  flex: 1;
  align-self: stretch;
  display: flex;
`;
const LowerLeft = styled.div`
  display: flex;
  flex-direction: column;
  align-items: center;
  width: 20px;
  color: #b9c3c7;
`;
const Cell = styled.div<{ $h: number; $color?: string }>`
  display: flex;
  align-items: center;
  justify-content: center;
  height: ${p => p.$h}px;
  color: ${p => p.$color ?? 'inherit'};
`;
const Grow = styled.div`
  flex: 1;
`;
const Fader = styled.input<{ $cap: string; $line: string }>`
  appearance: none;
  writing-mode: vertical-lr;
  direction: rtl;
  width: 13px;
  min-height: 0;
  align-self: stretch;
  margin: 5px 0 8px 1px;
  background:
    linear-gradient(transparent 22%, ${p => p.$line} 22%) center / 2px 100% no-repeat,
    linear-gradient(#2b363a, #2b363a) center / 3px 100% no-repeat;
  &::-webkit-slider-thumb {
    appearance: none;
    width: 12px;
    height: 21px;
    border-radius: 2px;
    background: ${p => p.$cap};
  }
`;
const SendArea = styled.div`
  display: flex;
  flex-direction: column;
  align-items: center;
  align-self: stretch;
  height: 61px;
  color: #b0babd;
`;
const ScrollHint = styled.div<{ $end?: boolean }>`
  display: flex;
  align-items: center;
  justify-content: ${p => (p.$end ? 'flex-start' : 'space-between')};
  align-self: stretch;
  margin-top: auto;
  padding: 0 4px 4px;
  ${p => p.$end && css`padding-left: 18px;`}
  color: #161d20;
  i { width: 18px; height: 3px; background: #191b22; }
`;
const ScaleBox = styled.div`
  width: 24px;
  height: 271px;
  margin-top: 4px;
  padding-top: 5px;
  border: 1px solid #242e31;
  background: #323d41;
  color: #747f83;
  font-family: ${NARROW};
  text-align: center;
`;
const ScaleMark = styled.div<{ $h: number; $fs: number }>`
  height: ${p => p.$h}px;
  line-height: ${p => p.$h}px;
  font-size: ${p => p.$fs}px;
`;
const Dot = styled.i<{ $rec?: boolean }>`
  width: ${p => (p.$rec ? 7 : 5)}px;
  height: ${p => (p.$rec ? 7 : 5)}px;
  border-radius: 50%;
  background: ${p => (p.$rec ? '#3a2730' : '#c9d1d3')};
  ${p => p.$rec && css`border: 2px solid #ef5b50;`}
`;

const silver = 'linear-gradient(#c3c8ca 0 7px, #8c9396 7px 10px, #2c3336 10px 12px, #aab0b2 12px 15px, #3a4144 15px 16px, #8d9497 16px)';
const orange = 'linear-gradient(#ffc23c 0 9px, #f09a12 9px 12px, #6b4208 12px 13px, #e28e10 13px)';
const green = 'linear-gradient(#a4e84e 0 9px, #75bd2b 9px 12px, #2c520f 12px 13px, #76c02c 13px)';

const ArmIcon = () => (
  <svg width="9" height="13" viewBox="0 0 9 13" fill="none" stroke="currentColor" strokeWidth="1.600"><path d="M1.500 9V4.500C1.500 0 7.500 0 7.500 4.500V9" /><path d="M4.500 5v8" strokeWidth="3" /></svg>
);
const UpDown = () => <svg width="8" height="9" viewBox="0 0 8 9" fill="currentColor"><path d="M0 4l4-4 4 4zM0 5.500h8L4 9z" /></svg>;
const LeftRight = () => <svg width="10" height="8" viewBox="0 0 10 8" fill="currentColor"><path d="M4.300 0v8L0 4zM5.700 0v8L10 4z" /></svg>;

type StripData = { head: string; name: string; tone: Tone; meter?: string; arm?: boolean; master?: boolean; idx?: number; w?: number };

const MixerStrip = ({ head, name, tone, meter = 'idle', arm, master, idx, w }: StripData) => (
  <Strip $tone={tone} $w={w}>
    <StripHead $tone={tone}>{head}</StripHead>
    <MeterRow>
      <StripName $bright={tone === 'selected' || tone === 'dark'}>{name}</StripName>
      <Meter $kind={meter}>{meter === 'live' && <><i /><b /></>}</Meter>
    </MeterRow>
    <LedRow><LedBox type="checkbox" defaultChecked aria-label={`${name} mute`} /></LedRow>
    <PanRow><Pan $d={21} aria-label={`${name} pan`} /></PanRow>
    <Lower>
      <LowerLeft>
        <Cell $h={13}><UpDown /></Cell>
        <Cell $h={15}><LeftRight /></Cell>
        <Cell $h={19}><SmallPan $d={9} aria-label={`${name} stereo`} /></Cell>
        <Grow />
        <Cell $h={18} $color={arm ? '#f0b144' : '#5f6b6f'}><ArmIcon /></Cell>
        <Cell $h={18} $color={master ? '#f0b144' : undefined}><Clock size={12} strokeWidth={3} /></Cell>
        <Cell $h={16}><Dot $rec={idx === 1} /></Cell>
      </LowerLeft>
      <Fader
        type="range"
        defaultValue={83}
        aria-label={`${name} level`}
        $cap={idx === 1 ? orange : idx === 3 ? green : silver}
        $line={idx === 1 ? '#d08a25' : idx === 3 ? '#7fae42' : 'transparent'}
      />
    </Lower>
    <SendArea>
      {master && (
        <svg width="36" height="61" viewBox="0 0 36 61" fill="none" stroke="#a6dd50" strokeWidth="2">
          <path d="M15 14l3-3 3 3z" fill="#a6dd50" strokeWidth="1" />
          <circle cx="18" cy="27" r="8.500" fill="#2c363a" stroke="none" />
          <path d="M23.500 36A11 11 0 1 1 29 30" />
          <path d="M18 39c3 7 11 10 13 22" strokeWidth="1.500" />
        </svg>
      )}
      {idx === 3 && (
        <svg width="36" height="61" viewBox="0 0 36 61" fill="none" stroke="#a6dd50" strokeWidth="1.500">
          <path d="M15 23h6v4h3l-6 6-6-6h3z" fill="#a6dd50" stroke="none" />
          <path d="M18 34c1 11-7 15-7 27" />
        </svg>
      )}
      {!master && idx !== 3 && <svg width="9" height="31" viewBox="0 0 9 31" fill="currentColor"><path d="M0 30l4.500-6L9 30z" /></svg>}
      {idx === 1 && <ScrollHint><Chevron d="M6 1L2 4l4 3" /><i /></ScrollHint>}
      {idx === 18 && <ScrollHint $end><Chevron d="M2 1l4 3-4 3" /></ScrollHint>}
    </SendArea>
  </Strip>
);

const marks: [string, number, number][] = [
  ['3', 20, 11], ['0', 21, 11], ['3', 20, 11], ['6', 21, 11], ['9', 20, 11], ['12', 20, 10], ['15', 19, 10], ['18', 17, 10],
  ['21', 17, 10], ['24', 16, 10], ['27', 14, 9], ['30', 12, 8], ['33', 10, 7], ['36', 10, 6], ['39', 8, 6],
];

/* ---------- insert inspector ---------- */

const Inspector = styled.div`
  flex: 0 0 183px;
  display: flex;
  flex-direction: column;
  background: #5a6366;
`;
const RouteRow = styled.div<{ $h: number; $line?: boolean }>`
  display: flex;
  align-items: center;
  gap: 6px;
  height: ${p => p.$h}px;
  padding: 0 3px 0 4px;
  color: #3d474b;
  ${p => p.$line && css`border-top: 1px solid #4b5558;`}
`;
const RouteSelect = styled.button<{ $flat?: boolean }>`
  flex: 1;
  display: flex;
  align-items: center;
  justify-content: space-between;
  height: 19px;
  padding: 0 2px;
  font-size: 10px;
  color: #dfe5e6;
  ${p => !p.$flat && css`background: #343e42; border: 1px solid #2a3336;`}
  svg { color: #7c878a; }
`;
const InputClock = styled(Clock)`
  margin: 0 3px;
  color: #a9b2b4;
`;
const Slots = styled.ul`
  padding: 1px 0 2px;
  border-top: 1px solid #4b5558;
  border-bottom: 1px solid #4b5558;
`;
const Slot = styled.li<{ $active?: boolean }>`
  display: flex;
  align-items: center;
  height: 18px;
  padding: 0 5px;
  gap: 4px;
  border-bottom: 1px solid #545d60;
  color: #cbd3d5;
  span { flex: 1; font: 11px/17px ${NARROW}; color: #7b8588; font-style: italic; padding-left: 2px; }
  ${p => p.$active && css`background: #404b50; span { font-size: 10px; color: #e4eaec; font-style: normal; padding-left: 0; }`}
`;
const MixKnob = styled.button<{ $active?: boolean }>`
  width: 16px;
  height: 16px;
  border-radius: 50%;
  border: 1px solid ${p => (p.$active ? '#f0f4f4' : '#8e999c')};
  background: radial-gradient(circle at 50% 35%, #515b60, #3c464b);
`;
const SlotLed = styled(LedBox)`
  width: 7px;
  height: 7px;
  margin-left: 1px;
`;
const EqRow = styled.div`
  display: flex;
  height: 97px;
  margin: 7px 0 0 2px;
  gap: 3px;
`;
const EqGraph = styled.div`
  width: 122px;
  border: 1px solid #454e51;
  background:
    linear-gradient(#d9e1e3, #d9e1e3) center / 100% 2px no-repeat,
    linear-gradient(90deg, transparent 60px, #535c5f 60px 61px, transparent 61px),
    #5d676a;
`;
const EqFaders = styled.div`
  display: flex;
  gap: 5px;
`;
const EqFader = styled(Fader)`
  width: 13px;
  margin: 0;
  background: linear-gradient(#42494d, #42494d) center / 3px 100% no-repeat;
  &::-webkit-slider-thumb { height: 16px; background: linear-gradient(#d5dadb 0 5px, #f0f3f3 5px 8px, #3f474b 8px 9px, #aab1b3 9px 12px, #4b5457 12px 13px, #838b8e 13px); }
`;
const EqKnobs = styled.div`
  display: flex;
  justify-content: space-between;
  padding: 8px 6px 0 3px;
  height: 44px;
  font-size: 11px;
  line-height: 18px;
  color: #363f42;
`;
const KnobGrid = styled.div`
  display: grid;
  grid-template-columns: 10px repeat(3, 14px);
  grid-auto-rows: 14px;
  gap: 3px 4px;
  align-items: center;
  padding-top: 2px;
`;
const EqKnob = ({ a }: { a: number }) => (
  <svg width="14" height="14" viewBox="0 0 14 14"><circle cx="7" cy="7" r="6.500" fill="#363f44" /><path d="M7 6V2" stroke="#d5dcde" strokeWidth="1.600" transform={`rotate(${a} 7 7)`} /></svg>
);
const InOut = ({ out }: { out?: boolean }) => (
  <svg width="12" height="14" viewBox="0 0 12 14" fill="currentColor">
    {out ? <><path d="M4 1C-1 2-1 12 4 13" fill="none" stroke="currentColor" strokeWidth="1.500" /><path d="M3 5h3V2l6 5-6 5V9H3z" /></>
      : <><path d="M7 1c6 0 6 9 0 9" fill="none" stroke="currentColor" strokeWidth="1.500" /><path d="M0 4.500h3V2l4 4-4 4V7.500H0zM2 12h2v1H2zM6 12h3v1H6z" /></>}
  </svg>
);

const MixerPanel = () => (
  <MixerWindow>
    <MixerTitle>
      <Tri size={8} />
      <HandIcon size={14} />
      <svg width="12" height="12" viewBox="0 0 12 12" fill="currentColor"><path d="M5 1l1-1 1 1v2l2 2H7v3l4 2v2H1v-2l4-2V5H3l2-2z" /></svg>
      <svg width="12" height="12" viewBox="0 0 12 12" fill="#64bdf0"><path d="M0 0l5 5v2l-5 4zM12 2v9L7 7.500v-2z" /><path d="M4 5h4v2H4z" /></svg>
      <svg width="12" height="12" viewBox="0 0 12 12"><rect x="1" y="1" width="10" height="10" fill="none" stroke="#f0b844" strokeWidth="1.500" /><rect x="8" y="1" width="3" height="10" fill="#f0b844" /></svg>
      <WideLabel>Wide <Tri size={5} /></WideLabel>
      <MixerCaption>
        Mixer - Insert 3
        <Push>{['min', 'max', 'close'].map(k => <button key={k} aria-label={k}><WinIcon kind={k} size={9} /></button>)}</Push>
      </MixerCaption>
    </MixerTitle>
    <MixerBody>
      <Strip $tone="normal" $w={36}>
        <StripHead $tone="normal">C</StripHead>
        <ScaleBox>{marks.map(([t, h, fs], i) => <ScaleMark key={i} $h={h} $fs={fs}>{t}</ScaleMark>)}</ScaleBox>
        <Grow />
        <Cell $h={18} $color="#5f6b6f"><ArmIcon /></Cell>
        <Cell $h={18} />
        <Cell $h={16}><Dot /></Cell>
        <SendArea />
      </Strip>
      <MixerStrip head="M" name="Master" tone="normal" meter="live" arm master w={38} />
      <Gap $w={11} />
      <StripsClip>
        <Strips>
          {Array.from({ length: 18 }, (_, i) => {
            const n = i + 1;
            return (
              <MixerStrip
                key={n}
                idx={n}
                head={String(n)}
                name={n === 2 ? '3x Osc' : `Insert ${n}`}
                tone={n === 1 ? 'purple' : n === 2 ? 'dark' : n === 3 ? 'selected' : 'normal'}
                meter={n === 1 ? 'live' : n === 3 ? 'selected' : 'idle'}
                arm={n === 2 || n === 3}
              />
            );
          })}
        </Strips>
      </StripsClip>
      <Gap $w={15} />
      <Inspector>
        <RouteRow $h={27}><InOut /><RouteSelect>(none)<Tri size={5} /></RouteSelect><InputClock size={15} /></RouteRow>
        <Slots>
          {['Fruity WaveShaper', ...Array.from({ length: 9 }, (_, i) => `Slot ${i + 2}`)].map((s, i) => (
            <Slot key={s} $active={i === 0}><Tri size={6} /><span>{s}</span><MixKnob $active={i === 0} aria-label={`${s} mix`} /><SlotLed type="checkbox" defaultChecked aria-label={`${s} enable`} /></Slot>
          ))}
        </Slots>
        <EqRow>
          <EqGraph />
          <EqFaders>{['Low', 'Mid', 'High'].map(b => <EqFader key={b} type="range" aria-label={`${b} gain`} $cap="none" $line="transparent" />)}</EqFaders>
        </EqRow>
        <EqKnobs>
          Equalizer
          <KnobGrid><span>▪</span><EqKnob a={-130} /><EqKnob a={0} /><EqKnob a={110} /><span>↔</span><EqKnob a={-75} /><EqKnob a={-70} /><EqKnob a={-75} /></KnobGrid>
        </EqKnobs>
        <RouteRow $h={27} $line><Clock size={14} /><RouteSelect $flat>(none)<Tri size={5} /></RouteSelect></RouteRow>
        <RouteRow $h={27} $line><InOut out /><RouteSelect>(none)<Tri size={5} /></RouteSelect></RouteRow>
      </Inspector>
    </MixerBody>
  </MixerWindow>
);

const ContextMenu = styled.div`
  position: absolute;
  left: 246px;
  top: 534px;
  width: 139px;
  display: flex;
  flex-direction: column;
  background: #b7c3c4;
  border: 1px solid #131a1c;
  font-size: 9px;
  color: #12191b;
  hr { width: 100%; margin: 2px 0; border: 0; border-top: 1px solid #8f9a9c; }
`;
const MenuItem = styled.button<{ $hot?: boolean }>`
  height: 15px;
  padding-left: 14px;
  line-height: 14px;
  text-align: left;
  ${p => p.$hot && css`background: #5b696e; color: #e5ebec;`}
`;
const Pointer = styled.svg`
  position: absolute;
  left: 49px;
  top: 37px;
`;

/* ---------- taskbar ---------- */

const Taskbar = styled.footer`
  display: grid;
  grid-template-columns: 1fr auto 1fr;
  align-items: center;
  height: 40px;
  background: #20211e;
  border-top: 1px solid #2d2c24;
  color: #e9e9e7;
  font-size: 10px;
  line-height: 13px;
`;
const Weather = styled.button`
  display: flex;
  align-items: center;
  gap: 8px;
  padding-left: 18px;
  text-align: left;
  span { color: #b9b9b6; }
`;
const Apps = styled.div`
  display: flex;
  align-items: center;
  padding-left: 6px;
`;
const AppButton = styled.button<{ $active?: boolean; $mark?: string }>`
  display: flex;
  flex-direction: column;
  align-items: center;
  justify-content: flex-end;
  gap: 2px;
  width: 33px;
  height: 34px;
  margin-left: 4px;
  border-radius: 4px;
  ${p => p.$active && css`background: #33342f;`}
  &::after { content: ''; width: ${p => (p.$active ? 12 : 4)}px; height: 3px; margin-bottom: 1px; border-radius: 2px; background: ${p => p.$mark ?? 'transparent'}; }
`;
const SearchBox = styled.label`
  display: flex;
  align-items: center;
  gap: 8px;
  width: 182px;
  height: 26px;
  margin: 0 0 0 12px;
  padding: 0 4px 0 9px;
  border-radius: 13px;
  background: #f1f1f0;
  color: #22221f;
  input { flex: 1; min-width: 0; font-size: 11px; }
  input::placeholder { color: #5b5b59; opacity: 1; }
`;
const Tray = styled.div`
  display: flex;
  align-items: center;
  justify-content: flex-end;
  gap: 7px;
  padding-right: 16px;
  text-align: center;
`;
const TrayText = styled.div<{ $right?: boolean }>`
  ${p => (p.$right ? css`text-align: right; margin-left: 3px;` : css`margin: 0 4px 0 6px;`)}
`;

const TaskbarRow = () => (
  <Taskbar>
    <Weather>
      <svg width="17" height="18" viewBox="0 0 17 18"><defs><linearGradient id="sun" x1="0" y1="0" x2="0" y2="1"><stop stopColor="#f8b32c" /><stop offset="1" stopColor="#ef7a12" /></linearGradient></defs><ellipse cx="8.500" cy="9" rx="8" ry="8.800" fill="url(#sun)" /></svg>
      <div>24°C<br /><span>Sunny</span></div>
    </Weather>
    <Apps>
      <button aria-label="Start"><svg width="20" height="20" viewBox="0 0 20 20"><defs><linearGradient id="win" x1="0" y1="0" x2="1" y2="1"><stop stopColor="#7fe0fb" /><stop offset="1" stopColor="#1b8ce8" /></linearGradient></defs><path d="M0 0h9.500v9.500H0zM10.500 0H20v9.500h-9.500zM0 10.500h9.500V20H0zM10.500 10.500H20V20h-9.500z" fill="url(#win)" /></svg></button>
      <SearchBox>
        <Search size={13} strokeWidth={2.500} />
        <input placeholder="Search" aria-label="Search" />
        <svg width="42" height="22" viewBox="0 0 42 22">
          <path d="M3 8l9 6-2 3-7-6z" fill="#d9a54c" /><path d="M3 4h1M8 3h1M20 17h2M5 17h2" stroke="#c4763a" strokeWidth="1.500" />
          <circle cx="16" cy="8" r="5" fill="#e5eaf0" stroke="#7a8698" strokeWidth="1.500" /><path d="M16 5v3h2M16 1v2" stroke="#4c586a" />
          <path d="M18 20l14-13 6-5 2 2-4 7 2 7-8 4z" fill="#b97b31" /><path d="M14 21l5-12 4 4 1 8z" fill="#e8a9a0" /><path d="M24 3l6 1-5 12-4-3z" fill="#f1dcae" /><circle cx="29" cy="16" r="2.500" fill="#7f9a2c" /><circle cx="34" cy="15" r="2.500" fill="#5f7a20" />
        </svg>
      </SearchBox>
      <AppButton aria-label="Task view"><svg width="22" height="22" viewBox="0 0 22 22"><path d="M2 9h11v11H2z" fill="#777873" /><path d="M8 3h13v12H8z" fill="#ececeb" /><path d="M8 9h5v6H8z" fill="#b7b7b5" /></svg></AppButton>
      <AppButton aria-label="Chat"><svg width="26" height="24" viewBox="0 0 26 24"><path d="M2 22l1-5C0 8 6 4 11 4c12 0 14 18 0 18z" fill="#6c63c4" /><path d="M6 9h7v3l4-2v7l-4-2v3H6z" fill="#f2f2fa" /><circle cx="19" cy="7" r="6.500" fill="#58b8ea" /><text x="17" y="11" fontSize="9" fill="#13202b">1</text></svg></AppButton>
      <AppButton aria-label="Mask app"><svg width="20" height="22" viewBox="0 0 20 22"><rect width="20" height="22" rx="2" fill="#0b2038" /><path d="M10 4v8M4 6c2-2 4-2 6-1 2-1 4-1 6 1v7c-2 6-10 6-12 0zM4 12h12M7 8v2M13 8v2" fill="none" stroke="#2291c4" strokeWidth="1.400" /></svg></AppButton>
      <AppButton aria-label="Edge"><svg width="22" height="22" viewBox="0 0 22 22"><circle cx="11" cy="11" r="10" fill="#1c7fd0" /><path d="M2 8C5-1 20-1 21 9c0 6-7 6-8 3 1-3-5-6-11-4z" fill="#4fcf8e" /><circle cx="6" cy="16" r="5.500" fill="#b8b4b1" /><circle cx="6" cy="14.500" r="2" fill="#514b48" /><path d="M2.500 19c1-3 6-3 7 0" fill="#514b48" /></svg></AppButton>
      <AppButton aria-label="Explorer"><svg width="22" height="22" viewBox="0 0 22 22"><path d="M1 2h8l2 3h10v15H1z" fill="#f2bf45" /><path d="M1 7h20v13H1z" fill="#f8d56d" /><path d="M5 15h12v5H5z" fill="#2376c4" /></svg></AppButton>
      <AppButton $active $mark="#58a9dc" aria-label="FL Studio"><svg width="22" height="22" viewBox="0 0 22 22"><circle cx="11" cy="11" r="10" fill="#2a2d2b" stroke="#4c504e" /><path d="M6 9c0-4 9-5 10 0 0 5-3 10-6 10-2 0-4-6-4-10z" fill="#f0782a" /><path d="M8 10c1-3 3-2 3 0s-1 6-2 6z" fill="#fbc25a" /><path d="M11 8L8 3l3 2 1-4 1 4 4-1-3 4z" fill="#5fae3c" /></svg></AppButton>
      <AppButton $mark="#9a9a98" aria-label="Recorder"><svg width="20" height="22" viewBox="0 0 20 22"><rect width="20" height="22" fill="#e07a36" /><circle cx="10" cy="10" r="4.500" fill="#fdf3ec" /><path d="M3 6V3h3M14 3h3v3M17 15v3h-3M6 18H3v-3" fill="none" stroke="#fbe3d2" strokeWidth="1.500" /></svg></AppButton>
    </Apps>
    <Tray>
      <Chevron d="M0 6l4-4 4 4" />
      <svg width="26" height="16" viewBox="-10 0 26 16"><path d="M4 1l3 2-3 2-3-2zM10 1l3 2-3 2-3-2zM4 6l3 2-3 2-3-2zM10 6l3 2-3 2-3-2z" fill="#e9e9e7" /><circle cx="11" cy="11" r="4.500" fill="#c22740" /><path d="M9.500 9.500l3 3M12.500 9.500l-3 3" stroke="#fff" /></svg>
      <TrayText>ENG<br />US</TrayText>
      <Wifi size={14} /><Volume2 size={14} /><BatteryCharging size={14} />
      <TrayText $right>12:20 PM<br />29/12/2023</TrayText>
      <Bell size={13} fill="#e9e9e7" />
    </Tray>
  </Taskbar>
);

export default function App() {
  return (
    <Shell>
      <Global />
      <TopBar />
      <Main>
        <BrowserPanel />
        <Splitter />
        <Workspace>
          <Playlist />
          <Shaper />
          <MixerPanel />
          <ContextMenu>
            <MenuItem>Route to this track</MenuItem>
            <MenuItem>Route to this track only</MenuItem>
            <hr />
            <MenuItem $hot>Sidechain to this track</MenuItem>
            <MenuItem>Sidechain to this track only</MenuItem>
            <Pointer width="10" height="16" viewBox="0 0 10 16"><path d="M1 1v12l3-3 2 5 2-1-2-4h4z" fill="#fff" stroke="#222" strokeWidth=".8" /></Pointer>
          </ContextMenu>
        </Workspace>
      </Main>
      <TaskbarRow />
    </Shell>
  );
}
